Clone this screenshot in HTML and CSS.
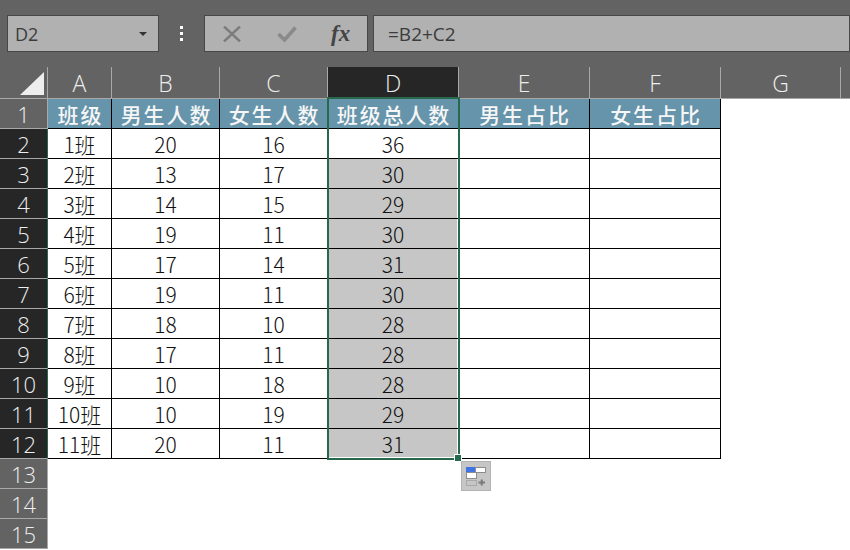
FILE: index.html
```html
<!DOCTYPE html>
<html lang="zh">
<head>
<meta charset="utf-8">
<title>班级人数</title>
<link rel="stylesheet" href="styles.css">
</head>
<body>
<div class="app">
  <div class="bar">
    <div class="namebox"><span>D2</span><i class="caret"></i></div>
    <div class="dots"><b></b><b></b><b></b></div>
    <div class="btns">
      <svg class="ico-x" width="18" height="16" viewBox="0 0 18 16"><path d="M1 0.5L17 15.5M17 0.5L1 15.5" stroke="#7c7c7c" stroke-width="2.4" fill="none"/></svg>
      <svg class="ico-check" width="20" height="16" viewBox="0 0 20 16"><path d="M1.5 8L7.5 14L18.5 1.5" stroke="#8a8a8a" stroke-width="3.6" fill="none"/></svg>
      <span class="fx">fx</span>
    </div>
    <div class="formula">=B2+C2</div>
  </div>
  <div class="sheet">
    <div class="cols">
      <div class="corner"><svg width="47" height="31" viewBox="0 0 47 31"><path d="M20 28L44 5V28Z" fill="#eeeeee"/></svg></div>
      <div class="ch">A</div><div class="ch">B</div><div class="ch">C</div><div class="ch on">D</div><div class="ch">E</div><div class="ch">F</div><div class="ch">G</div><div class="ch"></div>
    </div>
    <div class="row"><div class="rh">1</div><div class="c hd">班级</div><div class="c hd">男生人数</div><div class="c hd">女生人数</div><div class="c hd">班级总人数</div><div class="c hd">男生占比</div><div class="c hd">女生占比</div></div>
    <div class="row"><div class="rh on">2</div><div class="c">1班</div><div class="c">20</div><div class="c">16</div><div class="c first">36</div><div class="c"></div><div class="c"></div></div>
    <div class="row"><div class="rh on">3</div><div class="c">2班</div><div class="c">13</div><div class="c">17</div><div class="c sel">30</div><div class="c"></div><div class="c"></div></div>
    <div class="row"><div class="rh on">4</div><div class="c">3班</div><div class="c">14</div><div class="c">15</div><div class="c sel">29</div><div class="c"></div><div class="c"></div></div>
    <div class="row"><div class="rh on">5</div><div class="c">4班</div><div class="c">19</div><div class="c">11</div><div class="c sel">30</div><div class="c"></div><div class="c"></div></div>
    <div class="row"><div class="rh on">6</div><div class="c">5班</div><div class="c">17</div><div class="c">14</div><div class="c sel">31</div><div class="c"></div><div class="c"></div></div>
    <div class="row"><div class="rh on">7</div><div class="c">6班</div><div class="c">19</div><div class="c">11</div><div class="c sel">30</div><div class="c"></div><div class="c"></div></div>
    <div class="row"><div class="rh on">8</div><div class="c">7班</div><div class="c">18</div><div class="c">10</div><div class="c sel">28</div><div class="c"></div><div class="c"></div></div>
    <div class="row"><div class="rh on">9</div><div class="c">8班</div><div class="c">17</div><div class="c">11</div><div class="c sel">28</div><div class="c"></div><div class="c"></div></div>
    <div class="row"><div class="rh on">10</div><div class="c">9班</div><div class="c">10</div><div class="c">18</div><div class="c sel">28</div><div class="c"></div><div class="c"></div></div>
    <div class="row"><div class="rh on">11</div><div class="c">10班</div><div class="c">10</div><div class="c">19</div><div class="c sel">29</div><div class="c"></div><div class="c"></div></div>
    <div class="row"><div class="rh on">12</div><div class="c">11班</div><div class="c">20</div><div class="c">11</div><div class="c sel last">31</div><div class="c"></div><div class="c"></div></div>
    <div class="row"><div class="rh">13</div></div>
    <div class="row"><div class="rh">14</div></div>
    <div class="row"><div class="rh">15</div></div>
    <div class="selection"><i class="handle"></i></div>
    <div class="quick">
      <svg width="22" height="23" viewBox="0 0 22 23"><rect x="1" y="1" width="10" height="6" fill="#3e74e6"/><rect x="10.5" y="1.5" width="10" height="5" fill="#fff" stroke="#8c8c8c"/><rect x="1.5" y="6.5" width="10" height="6" fill="#fff" stroke="#8c8c8c"/><rect x="1.5" y="14.5" width="10" height="5" fill="none" stroke="#8c8c8c" stroke-dasharray="1 1"/><path d="M13.5 16.5H20M16.7 13.5V19.5" stroke="#7a7a7a" stroke-width="2"/></svg>
    </div>
  </div>
</div>
</body>
</html>
```

FILE: styles.css
```css
* { box-sizing: border-box; }
html, body { margin: 0; padding: 0; }
body {
  width: 850px;
  height: 550px;
  overflow: hidden;
  background: #fff;
  font-family: "Noto Sans CJK SC", "Noto Sans", sans-serif;
}
.app { display: flex; flex-direction: column; height: 550px; overflow: hidden; }
.bar {
  flex: none;
  height: 67px;
  background: #636363;
  display: flex;
  align-items: flex-start;
  padding: 15px 0 0 7px;
}
.namebox, .btns, .formula {
  height: 37px;
  background: #b1b1b1;
  border: 1px solid #474747;
  color: #3c3c3c;
  display: flex;
  align-items: center;
}
.namebox {
  width: 152px;
  padding: 0 11px 0 7px;
  justify-content: space-between;
  font-size: 18px;
  font-family: "Open Sans", sans-serif;
}
.caret {
  width: 0;
  height: 0;
  border-left: 4px solid transparent;
  border-right: 4px solid transparent;
  border-top: 4px solid #333;
}
.dots {
  width: 45px;
  height: 37px;
  display: flex;
  flex-direction: column;
  align-items: center;
  justify-content: center;
  gap: 3px;
}
.dots b { width: 3px; height: 3px; background: #fff; display: block; }
.btns {
  width: 164px;
  padding-left: 18px;
}
.ico-x { margin-right: 36px; }
.ico-check { margin-right: 34px; }
.fx {
  font-family: "Liberation Serif", serif;
  font-style: italic;
  font-weight: bold;
  font-size: 23px;
  line-height: 30px;
  color: #444;
}
.formula {
  flex: 1;
  margin-left: 5px;
  padding-left: 14px;
  font-size: 19px;
  font-family: "Open Sans", sans-serif;
}
.sheet { position: relative; flex: 1; }
.cols, .row {
  display: grid;
  grid-template-columns: 48px 64px 108px 108px 131px 131px 131px 120px 110px;
}
.cols { height: 32px; background: #636363; border-bottom: 1px solid #a8a8a8; }
.corner { display: flex; border-right: 1px solid #a8a8a8; }
.ch {
  border-right: 1px solid #a8a8a8;
  color: #eeeeee;
  font-size: 23px;
  font-weight: 300;
  font-family: "Open Sans", sans-serif;
  display: flex;
  align-items: center;
  justify-content: center;
  height: 31px;
}
.ch.on { background: #262626; }
.row { height: 30px; grid-template-rows: 30px; }
.rh {
  background: #636363;
  color: #eeeeee;
  border-bottom: 1px solid #a8a8a8;
  border-right: 1px solid #a8a8a8;
  font-size: 22px;
  font-weight: 300;
  padding-top: 2px;
  line-height: 27px;
  font-family: "Open Sans", sans-serif;
  display: flex;
  align-items: center;
  justify-content: center;
}
.rh.on { background: #262626; border-right-color: #27694d; }
.c {
  border-right: 1px solid #000;
  border-bottom: 1px solid #000;
  color: #111;
  font-size: 21px;
  font-weight: 300;
  padding-top: 2px;
  line-height: 27px;
  text-align: center;
  white-space: nowrap;
}
.c.hd {
  background: #6594ab;
  color: #f6f6f6;
  font-weight: 500;
  font-size: 21px;
  padding-top: 1px;
  line-height: 28px;
  letter-spacing: 1.9px;
  text-indent: 2px;
}
.c.sel { background: #c6c6c6; box-shadow: inset 1px 0 #fff, inset -1px 0 #fff; }
.c.last { box-shadow: inset 1px 0 #fff, inset -1px 0 #fff, inset 0 -1px #fff; }
.selection {
  position: absolute;
  left: 327px;
  top: 30px;
  width: 133px;
  height: 363px;
  border: 2px solid #27694d;
  pointer-events: none;
}
.handle {
  position: absolute;
  right: -4px;
  bottom: -4px;
  width: 8px;
  height: 8px;
  background: #27694d;
  border: 1px solid #fff;
}
.quick {
  position: absolute;
  left: 461px;
  top: 394px;
  width: 30px;
  height: 30px;
  background: #c6c6c6;
  border: 1px solid #b3b3b3;
  padding: 4px 0 0 3px;
}
```
